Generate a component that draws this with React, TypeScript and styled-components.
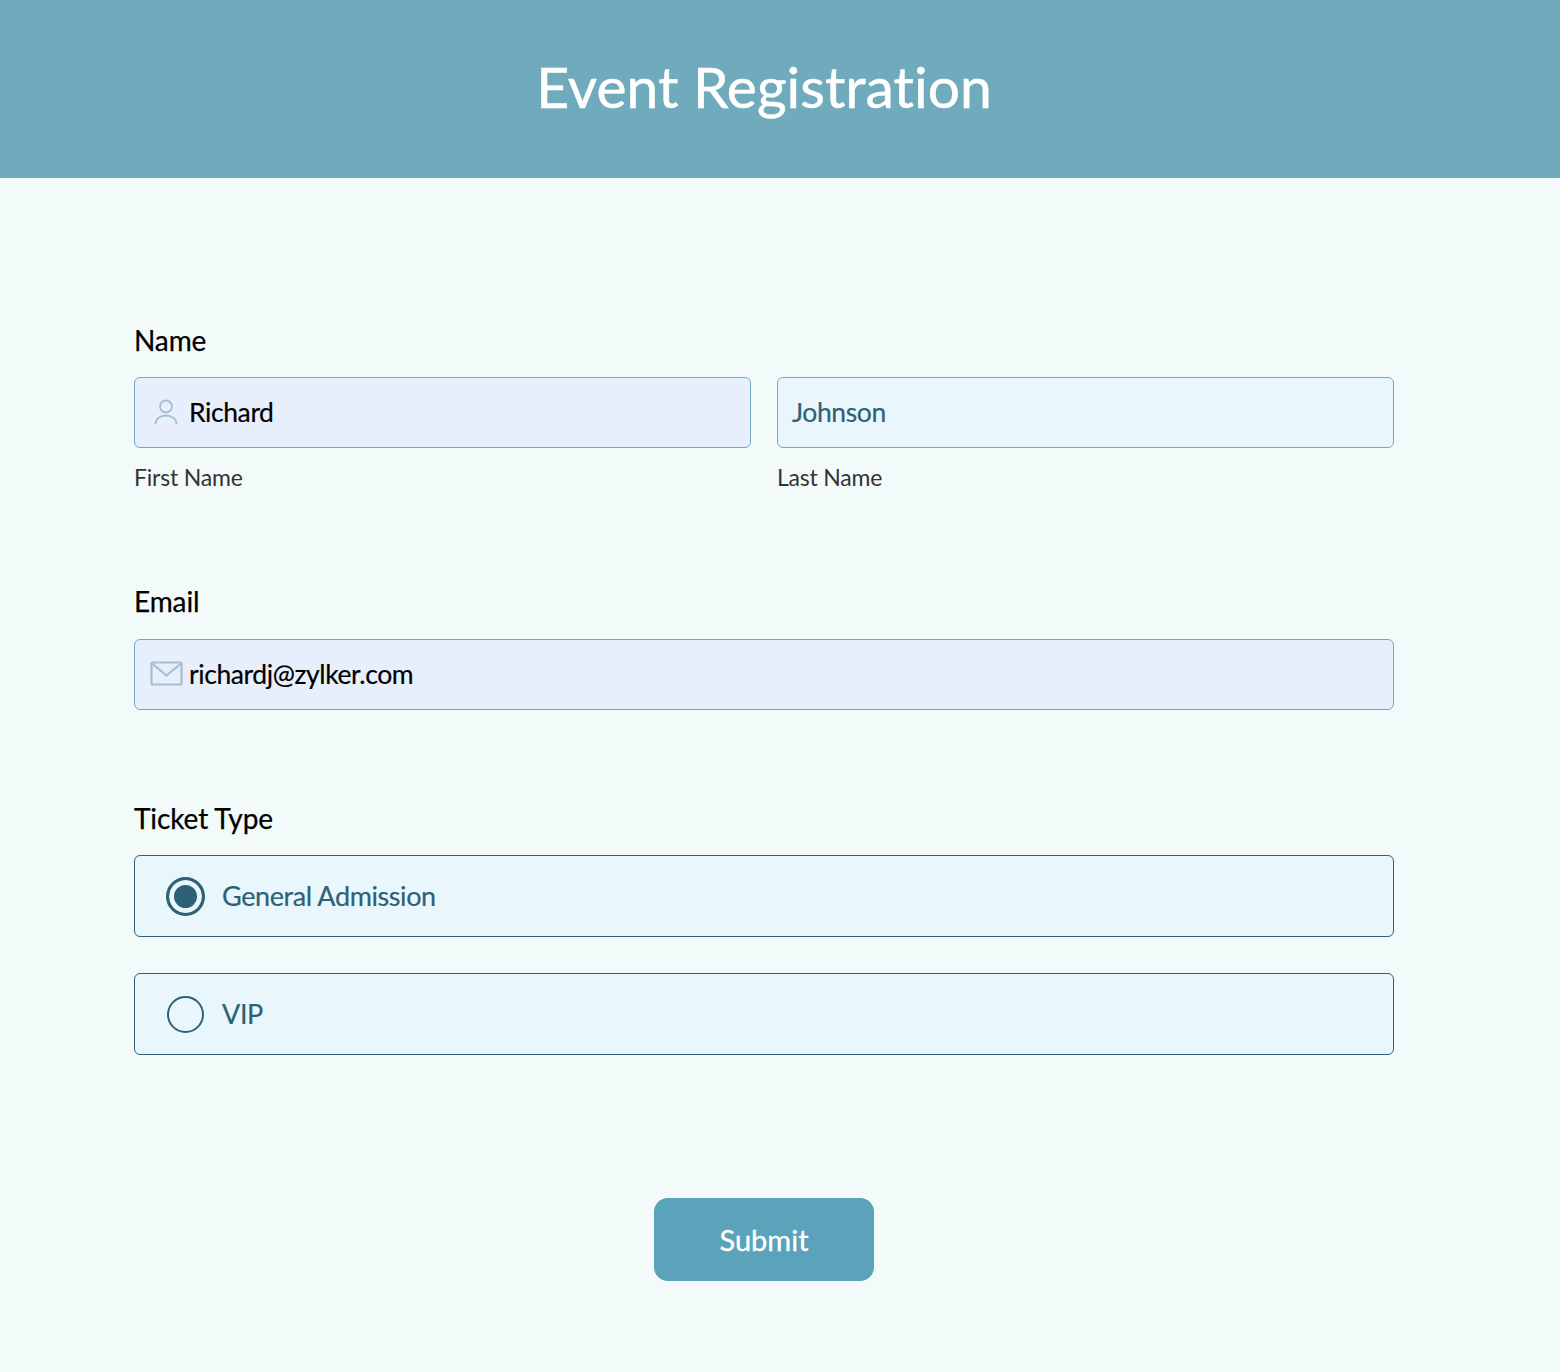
import React from 'react';
import styled, { createGlobalStyle } from 'styled-components';

const GlobalStyle = createGlobalStyle`
  html, body {
    margin: 0;
    padding: 0;
    background: #f3fbfa;
  }
  body {
    font-family: Lato, "Open Sans", sans-serif;
    font-variant-ligatures: none;
  }
`;

const UserIcon = () => (
  <svg width="24" height="28" viewBox="0 0 24 28" fill="none" stroke="#a5bfce" strokeWidth="1.8">
    <circle cx="12" cy="8.5" r="6" />
    <path d="M1.500 26c0-5 4.500-8.500 10.500-8.500S22.500 21 22.500 26" />
  </svg>
);

const MailIcon = () => (
  <svg width="33" height="25" viewBox="0 0 33 25" fill="none" stroke="#a5bfce" strokeWidth="2.2">
    <rect x="1.500" y="1.500" width="30" height="22" rx="1" />
    <path d="M2 2.500l14.500 12 14.500-12" />
  </svg>
);

const App: React.FC = () => {
  return (
    <Page>
      <GlobalStyle />
      <Header>
        <Title>Event Registration</Title>
      </Header>
      <Form>
        <NameField>
          <FieldLabel>Name</FieldLabel>
          <NameRow>
            <div>
              <Input filled>
                <IconSlot><UserIcon /></IconSlot>
                Richard
              </Input>
              <SubLabel>First Name</SubLabel>
            </div>
            <div>
              <Input>Johnson</Input>
              <SubLabel>Last Name</SubLabel>
            </div>
          </NameRow>
        </NameField>
        <EmailField>
          <FieldLabel>Email</FieldLabel>
          <Input filled>
            <IconSlot><MailIcon /></IconSlot>
            richardj@zylker.com
          </Input>
        </EmailField>
        <TicketField>
          <FieldLabel>Ticket Type</FieldLabel>
          <OptionList>
            <Option>
              <Radio checked />
              <OptionText>General Admission</OptionText>
            </Option>
            <Option>
              <Radio />
              <OptionText>VIP</OptionText>
            </Option>
          </OptionList>
        </TicketField>
        <Actions>
          <SubmitButton type="button">Submit</SubmitButton>
        </Actions>
      </Form>
    </Page>
  );
};

const Page = styled.div`
  width: 1560px;
  height: 1372px;
  background: #f3fbfa;
  overflow: hidden;
`;

const Header = styled.header`
  height: 178px;
  background: #6faabd;
  display: flex;
  align-items: center;
  justify-content: center;
  padding: 0 32px 7px 0;
  box-sizing: border-box;
`;

const Title = styled.h1`
  margin: 0;
  color: #fff;
  font-size: 57px;
  font-weight: 400;
  line-height: 70px;
  -webkit-text-stroke: 0.5px #fff;
`;

const Form = styled.form`
  width: 1260px;
  margin-left: 134px;
  padding-top: 145px;
  display: flex;
  flex-direction: column;
`;

const FieldLabel = styled.div`
  color: #000;
  font-size: 28px;
  letter-spacing: -0.1px;
  line-height: 34px;
  height: 34px;
  margin-bottom: 20px;
  -webkit-text-stroke: 0.25px #000;
`;

const NameField = styled.section``;

const EmailField = styled.section`
  margin-top: 92px;

  ${FieldLabel} {
    margin-bottom: 21px;
  }
`;

const TicketField = styled.section`
  margin-top: 91px;
`;

const NameRow = styled.div`
  display: grid;
  grid-template-columns: 617px 617px;
  column-gap: 26px;
`;

const Input = styled.div<{ filled?: boolean }>`
  height: 71px;
  box-sizing: border-box;
  display: flex;
  align-items: center;
  padding: 0 0 2px 14px;
  border: 1px solid #6faabd;
  border-radius: 6px;
  background: ${props => (props.filled ? '#e8effc' : '#e9f7fc')};
  color: ${props => (props.filled ? '#000' : '#2e6175')};
  font-size: 26.500px;
  letter-spacing: -0.4px;
  -webkit-text-stroke: 0.2px currentColor;
`;

const IconSlot = styled.span`
  width: 38px;
  display: flex;
  justify-content: center;
  margin: 0 4px 0 -2px;
  flex-shrink: 0;
`;

const SubLabel = styled.div`
  color: #333;
  font-size: 23px;
  letter-spacing: -0.2px;
  line-height: 30px;
  margin-top: 14px;
`;

const OptionList = styled.div`
  display: flex;
  flex-direction: column;
  gap: 36px;
`;

const Option = styled.label`
  height: 82px;
  box-sizing: border-box;
  display: flex;
  align-items: center;
  gap: 18px;
  padding-left: 31px;
  border: 1px solid #2e6175;
  border-radius: 6px;
  background: #e9f7fc;
  color: #2e6175;
  font-size: 27px;
  letter-spacing: -0.4px;
  -webkit-text-stroke: 0.2px currentColor;
`;

const OptionText = styled.span`
  padding-bottom: 2px;
`;

const Radio = styled.span<{ checked?: boolean }>`
  width: ${props => (props.checked ? '39px' : '37px')};
  height: ${props => (props.checked ? '39px' : '37px')};
  margin: 0 ${props => (props.checked ? '-0.5px' : '0.5px')};
  box-sizing: border-box;
  border-radius: 50%;
  border: ${props => (props.checked ? '3px' : '2px')} solid #2e6175;
  background: ${props => (props.checked ? '#2e6175' : 'transparent')};
  box-shadow: ${props => (props.checked ? 'inset 0 0 0 5px #e9f7fc' : 'none')};
  flex-shrink: 0;
`;

const Actions = styled.div`
  display: flex;
  justify-content: center;
  margin-top: 143px;
`;

const SubmitButton = styled.button`
  width: 220px;
  height: 83px;
  border: none;
  border-radius: 14px;
  background: #5ba3bb;
  color: #fff;
  font-family: inherit;
  font-size: 29px;
  -webkit-text-stroke: 0.3px #fff;
  cursor: pointer;
`;

export default App;
